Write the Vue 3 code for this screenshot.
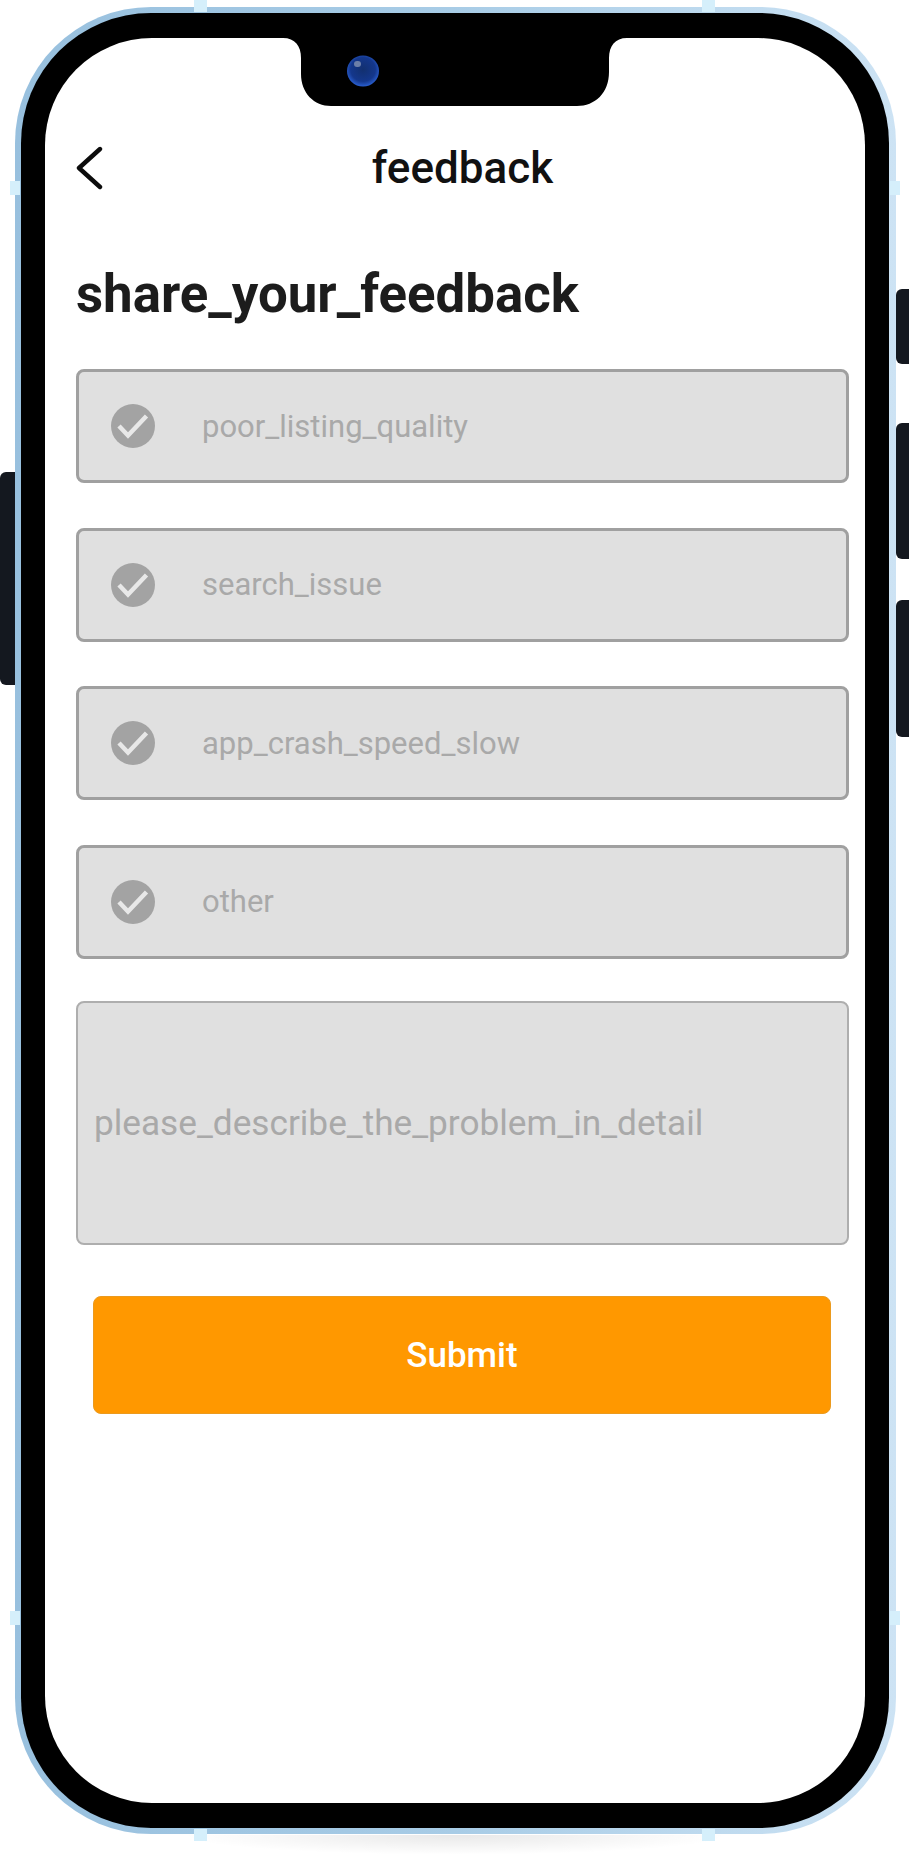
<template>
  <div class="page">
    <div class="device">
      <span v-for="s in sideButtons" :key="s.name" class="side-btn" :class="s.name"></span>
      <span v-for="h in handles" :key="h" class="handle" :class="h"></span>

      <div class="bezel">
        <div class="screen">
          <svg class="notch" width="344" height="68" viewBox="0 0 344 68">
            <defs>
              <radialGradient id="lens" cx="50%" cy="45%" r="55%">
                <stop offset="0%" stop-color="#12306f" />
                <stop offset="70%" stop-color="#14378c" />
                <stop offset="100%" stop-color="#2a5fd0" />
              </radialGradient>
            </defs>
            <path d="M0 0C12 0 18 8 18 20V36C18 55 31 68 48 68H294C312 68 326 55 326 34V20C326 8 332 0 344 0Z" fill="#000" />
            <ellipse cx="80" cy="33" rx="16" ry="15.5" fill="url(#lens)" />
            <rect x="71" y="23" width="7" height="6" rx="3" fill="#6c7fa8" />
          </svg>

          <header class="top-bar">
            <button class="back" aria-label="back">
              <svg width="28" height="46" viewBox="0 0 28 46">
                <path d="M24 4L3 23L24 42" fill="none" stroke="#0c0c0c" stroke-width="4.4" stroke-linecap="round" stroke-linejoin="round" />
              </svg>
            </button>
            <h1 class="top-title">feedback</h1>
            <span></span>
          </header>

          <h2 class="heading">share_your_feedback</h2>

          <div class="options">
            <div v-for="opt in options" :key="opt" class="option">
              <svg class="check" width="44" height="44" viewBox="0 0 44 44">
                <circle cx="22" cy="22" r="22" fill="#a3a3a3" />
                <path d="M8 22L17 31.500L35.500 12" fill="none" stroke="#e8e8e8" stroke-width="4.500" stroke-linejoin="miter" />
              </svg>
              <span class="option-label">{{ opt }}</span>
            </div>
          </div>

          <div class="detail">please_describe_the_problem_in_detail</div>

          <button class="submit">Submit</button>
        </div>
      </div>
    </div>
    <div class="floor-shadow"></div>
  </div>
</template>

<script setup>
const options = ['poor_listing_quality', 'search_issue', 'app_crash_speed_slow', 'other']

const sideButtons = [
  { name: 'left-1' },
  { name: 'right-1' },
  { name: 'right-2' },
  { name: 'right-3' },
]

const handles = ['h-t1', 'h-t2', 'h-l1', 'h-r1', 'h-l2', 'h-r2', 'h-b1', 'h-b2']
</script>

<style>
html, body { margin: 0; background: #fff; }
</style>

<style scoped>
.page {
  position: relative; width: 909px; height: 1858px; overflow: hidden;
  padding: 7px 0 0 15px; box-sizing: border-box;
  font-family: Roboto, "Liberation Sans", sans-serif;
}
.device {
  position: relative; z-index: 1; width: 881px; height: 1827px; padding: 6px 7px 6px 6px; box-sizing: border-box;
  border-radius: 136px;
  background: linear-gradient(90deg, #98c0de 0%, #a8cce6 50%, #cde3f4 100%);
}
.bezel {
  height: 100%; padding: 25px 24px; box-sizing: border-box;
  background: #000; border-radius: 130px;
}
.screen {
  position: relative; height: 100%; box-sizing: border-box;
  display: flex; flex-direction: column;
  padding: 0 16px 0 31px;
  background: #fff; border-radius: 107px;
}
.notch { position: absolute; left: 238px; top: 0; }

.side-btn { position: absolute; background: #14181f; }
.left-1 { left: -15px; top: 465px; width: 15px; height: 213px; border-radius: 6px 0 0 6px; }
.right-1 { right: -13px; top: 282px; width: 13px; height: 75px; border-radius: 6px 0 0 6px; }
.right-2 { right: -13px; top: 416px; width: 13px; height: 136px; border-radius: 6px 0 0 6px; }
.right-3 { right: -13px; top: 593px; width: 13px; height: 137px; border-radius: 6px 0 0 6px; }

.handle { position: absolute; z-index: 2; background: #d5effb; }
.h-t1, .h-t2, .h-b1, .h-b2 { width: 13px; height: 12px; }
.h-l1, .h-l2, .h-r1, .h-r2 { width: 10px; height: 14px; }
.h-t1 { left: 179px; top: -7px; }
.h-t2 { left: 687px; top: -7px; }
.h-b1 { left: 179px; top: 1822px; }
.h-b2 { left: 687px; top: 1822px; }
.h-l1 { left: -5px; top: 174px; }
.h-r1 { left: 875px; top: 174px; }
.h-l2 { left: -5px; top: 1604px; }
.h-r2 { left: 875px; top: 1604px; }

.floor-shadow {
  position: absolute; left: 180px; top: 1835px; width: 550px; height: 20px;
  background: radial-gradient(ellipse at 50% 0, rgba(0,0,0,0.09), rgba(0,0,0,0) 70%);
}

.top-bar {
  display: grid; grid-template-columns: 1fr auto 1fr; align-items: center;
  height: 60px; margin-top: 100px;
}
.back { width: 28px; height: 46px; padding: 0; border: 0; background: none; display: block; }
.top-title { margin: 0; font-size: 44px; font-weight: 500; color: #111; line-height: 60px; }

.heading {
  margin: 68px 0 0; font-size: 52.8px; line-height: 56px; font-weight: 700; color: #1c1c1c;
}

.options { display: flex; flex-direction: column; gap: 44.5px; margin-top: 47px; }
.option {
  display: flex; align-items: center; height: 114px; box-sizing: border-box;
  padding-left: 32px; background: #e0e0e0;
  border: 3px solid #a0a0a0; border-radius: 8px;
}
.check { flex: none; }
.option-label { margin-left: 47px; font-size: 31px; color: #a9a9a9; }

.detail {
  display: flex; align-items: center; height: 244px; box-sizing: border-box; margin-top: 42.5px;
  padding-left: 16px; background: #e0e0e0; font-size: 35.2px; color: #a9a9a9;
  border: 2px solid #aeaeae; border-radius: 8px;
}

.submit {
  height: 118px; margin: 51px 18px 0 17px; border: 1px solid #eb9a1e; border-radius: 8px;
  background: #ff9800; color: #fff; font-family: inherit; font-size: 35px; font-weight: 500;
}
</style>
